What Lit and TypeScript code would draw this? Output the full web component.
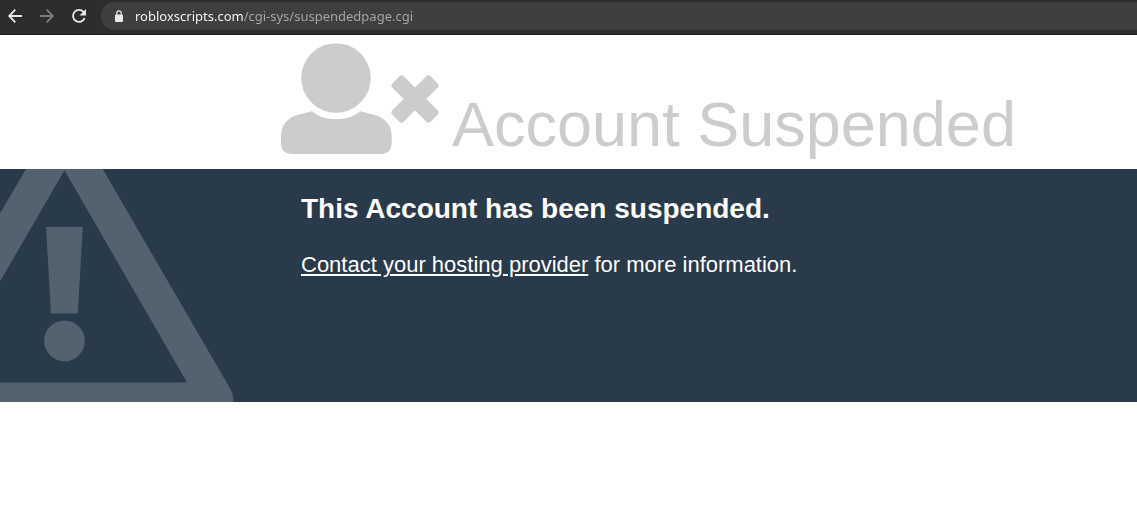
import { LitElement, html, css } from "lit";
import { customElement, property } from "lit/decorators.js";

@customElement("browser-bar")
class BrowserBar extends LitElement {
  @property() address = "";

  static styles = css`
    :host {
      display: block;
    }
    .bar {
      display: flex;
      align-items: center;
      box-sizing: border-box;
      height: 35px;
      padding: 0 0 2px 4px;
      background: #2d2d2d;
      border-bottom: 1px solid #1b1b1b;
    }
    .nav {
      display: flex;
      gap: 10px;
      margin-right: 11px;
    }
    .nav button {
      display: block;
      width: 22px;
      height: 22px;
      padding: 0;
      border: 0;
      background: none;
      color: #e8e8e8;
    }
    .nav button:disabled {
      color: #7d7d7d;
    }
    .nav svg {
      display: block;
      width: 22px;
      height: 22px;
      fill: none;
      stroke: currentColor;
      stroke-width: 1.8;
    }
    .nav .solid {
      fill: currentColor;
      stroke: none;
    }
    .omnibox {
      display: flex;
      flex: 1;
      align-items: center;
      gap: 11px;
      height: 28px;
      padding-left: 13px;
      border-radius: 14px 0 0 14px;
      background: #3f3f3f;
    }
    .lock {
      width: 10px;
      height: 12px;
    }
    .address {
      flex: 1;
      min-width: 0;
      height: 20px;
      padding: 0;
      border: 0;
      outline: 0;
      font: 13px/20px "Noto Sans", "Open Sans", sans-serif;
      color: transparent;
      caret-color: #ffffff;
      background: linear-gradient(90deg, #ffffff 109px, #a9a9a9 109px);
      background-clip: text;
      -webkit-background-clip: text;
    }
  `;

  render() {
    return html`
      <nav class="bar">
        <div class="nav">
          <button aria-label="Back">
            <svg viewBox="0 0 22 22"><path d="M18 11H5.500M11.300 4.700 5.200 11 11.300 17.300" /></svg>
          </button>
          <button aria-label="Forward" disabled>
            <svg viewBox="0 0 22 22"><path d="M4 11H16.500M10.700 4.700 16.800 11 10.700 17.300" /></svg>
          </button>
          <button aria-label="Reload">
            <svg viewBox="0 0 22 22">
              <path d="M16.600 13.200A6 6 0 1 1 15.600 7" />
              <path class="solid" d="M18 4V10.500H11.500Z" />
            </svg>
          </button>
        </div>
        <label class="omnibox">
          <svg class="lock" viewBox="0 0 10 12" aria-hidden="true">
            <rect x="1" y="4.500" width="8" height="7.500" rx="1" fill="#e8e8e8" />
            <path d="M2.800 5V3a2.200 2.200 0 0 1 4.400 0V5" fill="none" stroke="#e8e8e8" stroke-width="1.200" />
          </svg>
          <input class="address" type="text" aria-label="Address" spellcheck="false" .value=${this.address} />
        </label>
      </nav>
    `;
  }
}

@customElement("app-root")
class AppRoot extends LitElement {
  static styles = css`
    :host {
      display: block;
      min-height: 100vh;
      background: #ffffff;
      font-family: "Liberation Sans", Arial, sans-serif;
    }
    .masthead {
      display: flex;
      align-items: flex-end;
      gap: 13px;
      padding: 8px 0 9px 281px;
      color: #cccccc;
    }
    .user {
      flex: none;
      width: 158px;
      height: 111px;
      margin-bottom: 6px;
      fill: currentColor;
    }
    .title {
      margin: 0;
      font-size: 63px;
      font-weight: 400;
      line-height: 72px;
    }
    .notice {
      display: flex;
      gap: 67px;
      background: #293a4a;
      color: #ffffff;
    }
    .warning {
      flex: none;
      width: 234px;
      height: 233px;
      fill: #54616e;
    }
    .message {
      padding-top: 24px;
    }
    .message h2 {
      margin: 0 0 27px;
      font-size: 28px;
      line-height: 32px;
    }
    .message p {
      margin: 0;
      font-size: 22px;
      line-height: 26px;
    }
    .message a {
      color: inherit;
    }
  `;

  render() {
    return html`
      <browser-bar address="robloxscripts.com/cgi-sys/suspendedpage.cgi"></browser-bar>
      <header class="masthead">
        <svg class="user" viewBox="281 43 158 111" aria-hidden="true">
          <circle cx="336" cy="78" r="34.800" />
          <path
            d="M312 111.300C318 116.500 326 119.300 336 119.300S354 116.500 360.300 111.300L374 114.800C385 117.600 391.700 125.500 391.700 136V143C391.700 150 387.500 154 380.700 154H292C285.200 154 281 150 281 143V136C281 125.500 287.500 117.600 298 114.800Z"
          />
          <g transform="translate(415 99)">
            <rect x="-27" y="-8" width="54" height="16" rx="3" transform="rotate(45)" />
            <rect x="-27" y="-8" width="54" height="16" rx="3" transform="rotate(-45)" />
          </g>
        </svg>
        <h1 class="title">Account Suspended</h1>
      </header>
      <main class="notice">
        <svg class="warning" viewBox="0 169 234 233" aria-hidden="true">
          <path
            fill-rule="evenodd"
            d="M26 169H102.700L231 390Q233.300 394 233.300 399V402H0V382.600H187L64.500 170.300L0 281.500V213.500Z"
          />
          <path d="M46 227H82.800L77.800 313.600H51Z" />
          <circle cx="64.500" cy="340.800" r="20.400" />
        </svg>
        <section class="message">
          <h2>This Account has been suspended.</h2>
          <p><a href="#">Contact your hosting provider</a> for more information.</p>
        </section>
      </main>
    `;
  }
}
